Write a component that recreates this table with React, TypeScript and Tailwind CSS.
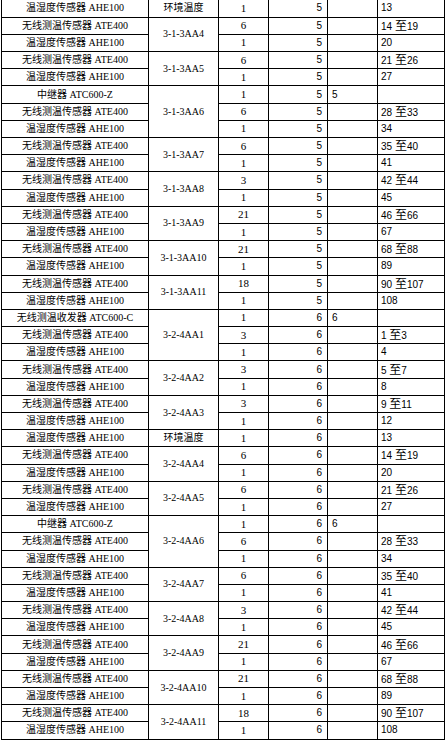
import React from "react";

type Row = {
  name: string;
  loc?: string;
  span?: number;
  qty: string;
  a: string;
  b?: string;
  range?: string;
};

const ATE = "无线测温传感器 ATE400";
const AHE = "温湿度传感器 AHE100";

// 每个箱体: 传感器数量 + 起始编号
function pair(loc: string, qty: number, start: number, a: string): Row[] {
  const end = start + qty - 1;
  return [
    { name: ATE, loc, span: 2, qty: String(qty), a, range: qty > 1 ? `${start} 至${end}` : String(start) },
    { name: AHE, qty: "1", a, range: String(end + 1) },
  ];
}

function tail(prefix: string, a: string): Row[] {
  return [
    { name: AHE, loc: "环境温度", span: 1, qty: "1", a, range: "13" },
    ...pair(`${prefix}AA4`, 6, 14, a),
    ...pair(`${prefix}AA5`, 6, 21, a),
    { name: "中继器 ATC600-Z", loc: `${prefix}AA6`, span: 3, qty: "1", a, b: a },
    { name: ATE, qty: "6", a, range: "28 至33" },
    { name: AHE, qty: "1", a, range: "34" },
    ...pair(`${prefix}AA7`, 6, 35, a),
    ...pair(`${prefix}AA8`, 3, 42, a),
    ...pair(`${prefix}AA9`, 21, 46, a),
    ...pair(`${prefix}AA10`, 21, 68, a),
    ...pair(`${prefix}AA11`, 18, 90, a),
  ];
}

const rows: Row[] = [
  ...tail("3-1-3", "5"),
  { name: "无线测温收发器 ATC600-C", loc: "3-2-4AA1", span: 3, qty: "1", a: "6", b: "6" },
  { name: ATE, qty: "3", a: "6", range: "1 至3" },
  { name: AHE, qty: "1", a: "6", range: "4" },
  ...pair("3-2-4AA2", 3, 5, "6"),
  ...pair("3-2-4AA3", 3, 9, "6"),
  ...tail("3-2-4", "6"),
];

function Range({ text }: { text?: string }) {
  if (!text) return null;
  const parts = text.split("至");
  if (parts.length < 2) return <>{text}</>;
  return (
    <>
      {parts[0]}
      <span className="text-[12px]">至</span>
      {parts[1]}
    </>
  );
}

const serif = "font-['Liberation_Serif','Noto_Sans_CJK_SC',serif]";
const sans = "font-['Liberation_Sans','Noto_Sans_CJK_SC',sans-serif]";

export default function App() {
  return (
    <div className="min-h-[742px] bg-white pl-[1px] text-black">
      <table className="w-[443px] table-fixed border-collapse">
        <colgroup>
          <col className="w-[147px]" />
          <col className="w-[70px]" />
          <col className="w-[50px]" />
          <col className="w-[59px]" />
          <col className="w-[50px]" />
          <col className="w-[67px]" />
        </colgroup>
        <tbody>
          {rows.map((r, i) => {
            const top = i === 0 ? "border-t-0" : "";
            return (
              <tr key={i} className="h-[17.19px]">
                <td className={`border border-black p-0 text-center text-[10px] leading-none whitespace-nowrap ${serif} ${top}`}>
                  {r.name}
                </td>
                {r.loc && (
                  <td
                    rowSpan={r.span}
                    className={`border border-black p-0 text-center text-[10px] leading-none whitespace-nowrap ${serif} ${top}`}
                  >
                    {r.loc}
                  </td>
                )}
                <td className={`border border-black p-0 text-center text-[11px] leading-none ${serif} ${top}`}>{r.qty}</td>
                <td className={`border border-black p-0 pr-[5px] text-right text-[10px] leading-none ${sans} ${top}`}>{r.a}</td>
                <td className={`border border-black p-0 pl-[4px] text-left text-[10px] leading-none ${sans} ${top}`}>{r.b}</td>
                <td className={`border border-black p-0 pl-[3px] text-left text-[10px] leading-none whitespace-nowrap ${sans} ${top}`}>
                  <Range text={r.range} />
                </td>
              </tr>
            );
          })}
        </tbody>
      </table>
    </div>
  );
}
